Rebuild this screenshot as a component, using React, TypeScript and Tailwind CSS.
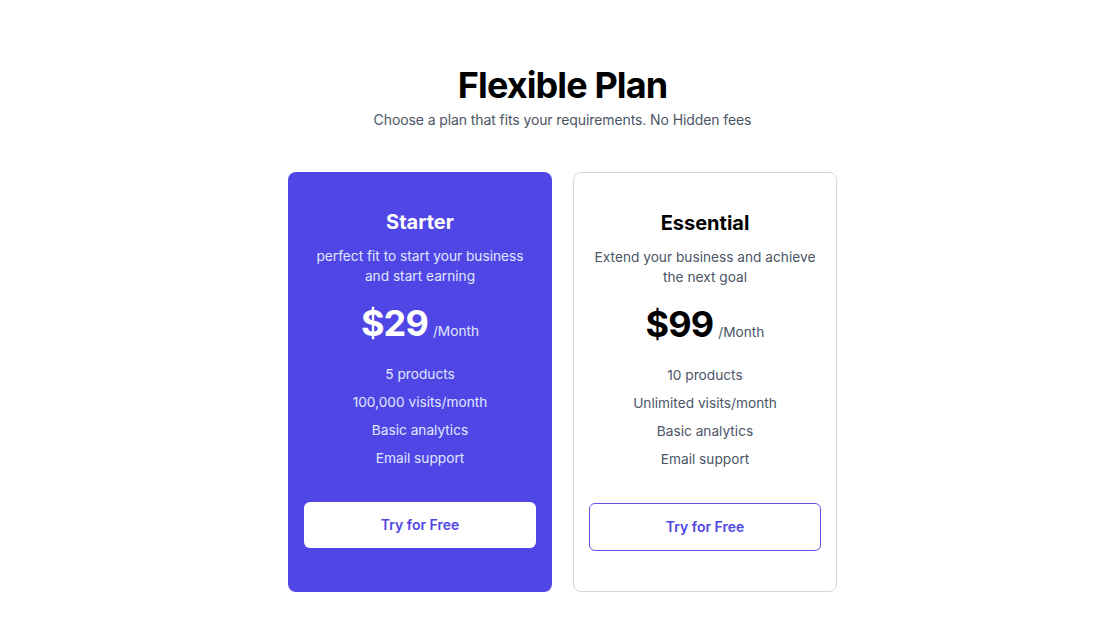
const plans = [
  {
    id: "starter",
    title: "Starter",
    description: "perfect fit to start your business and start earning",
    price: "$29",
    features: ["5 products", "100,000 visits/month", "Basic analytics", "Email support"],
    highlighted: true,
  },
  {
    id: "essential",
    title: "Essential",
    description: "Extend your business and achieve the next goal",
    price: "$99",
    features: ["10 products", "Unlimited visits/month", "Basic analytics", "Email support"],
    highlighted: false,
  },
]

export default function App() {
  return (
    <div className="min-h-screen bg-white pt-[65px] pl-[25px] font-['Inter',sans-serif]">
      <div className="flex flex-col items-center">
        <h1 className="text-4xl leading-10 font-bold text-black tracking-tight">Flexible Plan</h1>
        <p className="mt-[5px] text-sm leading-5 text-gray-600 tracking-[-0.1px]">
          Choose a plan that fits your requirements. No Hidden fees
        </p>

        <div className="mt-[42px] flex gap-[21px]">
          {plans.map((plan) => (
            <div
              key={plan.id}
              className={
                plan.highlighted
                  ? "w-[264px] h-[420px] rounded-lg bg-[#4f46e5] px-4 pt-9 flex flex-col items-center text-center"
                  : "w-[264px] h-[420px] rounded-lg border border-gray-300 bg-white px-[15px] pt-9 flex flex-col items-center text-center"
              }
            >
              <h2 className={`text-xl leading-7 font-bold ${plan.highlighted ? "text-white" : "text-black"}`}>
                {plan.title}
              </h2>
              <p
                className={`mt-2.5 text-[13.7px] leading-5 ${plan.highlighted ? "text-indigo-100" : "text-gray-600"}`}
              >
                {plan.description}
              </p>
              <div className="mt-[17px] flex items-baseline gap-[5px]">
                <span
                  className={`text-4xl leading-10 font-bold tracking-tight ${plan.highlighted ? "text-white" : "text-black"}`}
                >
                  {plan.price}
                </span>
                <span className={`text-[13.7px] ${plan.highlighted ? "text-indigo-100" : "text-gray-600"}`}>
                  /Month
                </span>
              </div>
              <ul className="mt-[21px] flex flex-col gap-2">
                {plan.features.map((f) => (
                  <li
                    key={f}
                    className={`text-[13.7px] leading-5 ${plan.highlighted ? "text-indigo-100" : "text-gray-600"}`}
                  >
                    {f}
                  </li>
                ))}
              </ul>
              <button
                className={
                  plan.highlighted
                    ? "mt-[34px] w-full h-[46px] rounded-md bg-white text-sm font-semibold text-[#4f46e5]"
                    : "mt-[34px] w-full h-[48px] rounded-md border border-[#5b54e6] bg-white text-sm font-semibold text-[#4f46e5]"
                }
              >
                Try for Free
              </button>
            </div>
          ))}
        </div>
      </div>
    </div>
  )
}
